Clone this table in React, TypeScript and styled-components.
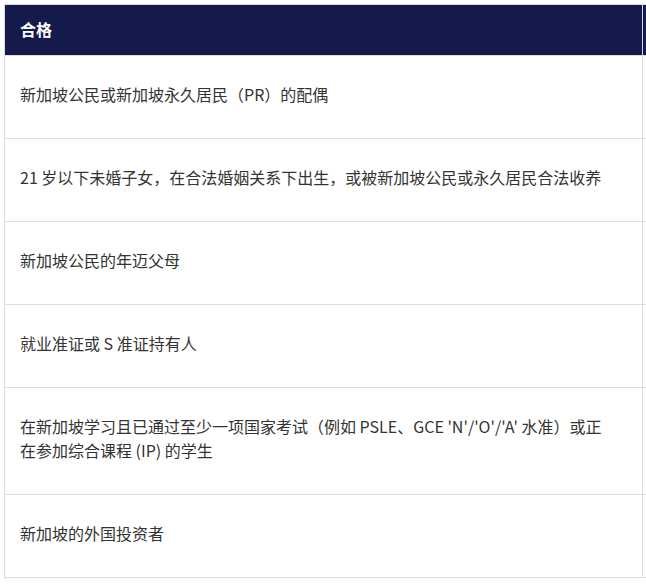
import React from "react";
import styled, { createGlobalStyle } from "styled-components";

const Global = createGlobalStyle`
  html, body {
    margin: 0;
    padding: 0;
    background: #ffffff;
    overflow: hidden;
  }
  body {
    font-family: "Noto Sans CJK SC", "Noto Sans", "Liberation Sans", sans-serif;
  }
`;

const Wrap = styled.div`
  padding: 4px 0 0 4px;
  width: 1100px;
`;

const Table = styled.table`
  border-collapse: collapse;
  table-layout: fixed;
  width: 1000px;
  border: 1px solid #dcdcdc;
`;

const HeadCell = styled.th`
  background: #151a4c;
  color: #ffffff;
  font-size: 16px;
  font-weight: 700;
  text-align: left;
  height: 51px;
  padding: 0 15px 3px;
  border-right: 1px solid #d5d8e6;
  box-sizing: border-box;
`;

const Cell = styled.td`
  color: #333333;
  font-size: 16px;
  line-height: 24px;
  padding: 26px 30px 32px 15px;
  vertical-align: middle;
  border-top: 1px solid #dddddd;
  border-right: 1px solid #dddddd;
`;

const rows = [
  "新加坡公民或新加坡永久居民（PR）的配偶",
  "21 岁以下未婚子女，在合法婚姻关系下出生，或被新加坡公民或永久居民合法收养",
  "新加坡公民的年迈父母",
  "就业准证或 S 准证持有人",
  "在新加坡学习且已通过至少一项国家考试（例如 PSLE、GCE 'N'/'O'/'A' 水准）或正在参加综合课程 (IP) 的学生",
  "新加坡的外国投资者",
];

export default function App() {
  return (
    <>
      <Global />
      <Wrap>
        <Table>
          <colgroup>
            <col style={{ width: 638 }} />
            <col style={{ width: 362 }} />
          </colgroup>
          <thead>
            <tr>
              <HeadCell>合格</HeadCell>
              <HeadCell></HeadCell>
            </tr>
          </thead>
          <tbody>
            {rows.map((r, i) => (
              <tr key={i}>
                <Cell>{r}</Cell>
                <Cell></Cell>
              </tr>
            ))}
          </tbody>
        </Table>
      </Wrap>
    </>
  );
}
